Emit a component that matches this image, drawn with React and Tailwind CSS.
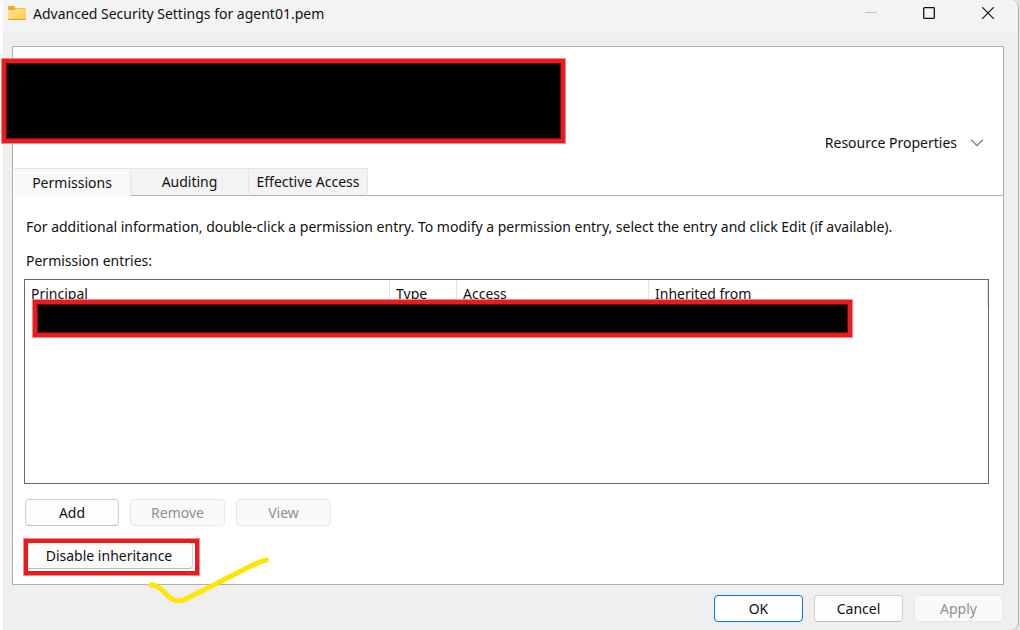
import React from "react";

const dialogButton =
  "h-[27px] rounded border border-[#d0d0d0] border-b-[#bcbcbc] bg-[#fdfdfd] text-center leading-5 disabled:border-[#e8e8e8] disabled:bg-[#f9f9f9] disabled:text-[#909090]";

const frame = "absolute z-10 border-4 border-[#e81c1c] outline outline-1 outline-[#f28a8a]";

const redaction = "bg-black shadow-[inset_0_0_0_1px_#6e0d0d]";

function FolderIcon() {
  return (
    <svg width="18" height="15" viewBox="0 0 18 15" aria-hidden="true">
      <defs>
        <linearGradient id="folder" x1="0" y1="0" x2="1" y2="1">
          <stop offset="0" stopColor="#ffe9a0" />
          <stop offset="1" stopColor="#ffcb3f" />
        </linearGradient>
      </defs>
      <path d="M0 1.2C0 .5.5 0 1.2 0h4.6l1.7 2H17c.6 0 1 .4 1 1v10H0z" fill="#f2ab17" />
      <path d="M0 4h6.2l1.6-1.6H17.2c.5 0 .8.3.8.8V13c0 .6-.4 1-1 1H1c-.6 0-1-.4-1-1z" fill="url(#folder)" />
      <path d="M.2 13.4h17.6" stroke="#e9a11b" strokeWidth="1" />
    </svg>
  );
}

function TitleBar() {
  return (
    <header className="flex h-8 items-start justify-between rounded-tr-lg bg-[#f3f3f3] pl-[5px]">
      <div className="flex h-[27px] items-center gap-[7px]">
        <FolderIcon />
        <h1 className="whitespace-nowrap">Advanced Security Settings for agent01.pem</h1>
      </div>
      <div className="flex h-[26px]">
        <button type="button" aria-label="Minimize" disabled className="flex w-[59px] items-center justify-center">
          <svg width="12" height="12" viewBox="0 0 12 12">
            <path d="M0 5.5h12" stroke="#c4c4c4" />
          </svg>
        </button>
        <button type="button" aria-label="Maximize" className="flex w-[58px] items-center justify-center">
          <svg width="12" height="12" viewBox="0 0 12 12">
            <rect x=".7" y=".7" width="10.6" height="10.6" rx=".8" fill="none" stroke="#111" strokeWidth="1.3" />
          </svg>
        </button>
        <button type="button" aria-label="Close" className="flex w-[60px] items-center justify-center">
          <svg width="12" height="12" viewBox="0 0 12 12">
            <path d="M.3.3l11.4 11.4M11.7.3L.3 11.7" stroke="#111" strokeWidth="1.2" />
          </svg>
        </button>
      </div>
    </header>
  );
}

function Tabs() {
  return (
    <div role="tablist" className="flex h-7 pl-px">
      <button type="button" role="tab" aria-selected="true" className="w-[117px] border-t border-r border-[#e5e5e5] bg-[#f9f9f9]">
        Permissions
      </button>
      <button type="button" role="tab" aria-selected="false" className="w-[118px] border-t border-r border-b border-t-[#e5e5e5] border-r-[#e5e5e5] border-b-[#b0b0b0] bg-[#f3f3f3]">
        Auditing
      </button>
      <button type="button" role="tab" aria-selected="false" className="w-[119px] border-t border-r border-b border-t-[#e5e5e5] border-r-[#e5e5e5] border-b-[#b0b0b0] bg-[#f3f3f3] whitespace-nowrap">
        Effective Access
      </button>
      <div className="grow border-b border-[#b0b0b0]" />
    </div>
  );
}

function Entries() {
  return (
    <div className="relative mt-2 grow border border-[#666]">
      <table className="w-full table-fixed border-separate border-spacing-0 text-left">
        <thead>
          <tr className="h-[26px]">
            <th scope="col" className="w-[365px] border-r border-[#e5e5e5] p-0 pt-0.5 pl-1.5 font-normal">Principal</th>
            <th scope="col" className="w-[67px] border-r border-[#e5e5e5] p-0 pt-0.5 pl-1.5 font-normal">Type</th>
            <th scope="col" className="w-[192px] border-r border-[#e5e5e5] p-0 pt-0.5 pl-1.5 font-normal">Access</th>
            <th scope="col" className="border-r border-[#e5e5e5] p-0 pt-0.5 pl-1.5 font-normal">Inherited from</th>
          </tr>
        </thead>
      </table>
      <div className={`${frame} ${redaction} top-5 left-2 h-[37px] w-[819px]`} />
    </div>
  );
}

export default function App() {
  return (
    <div className="flex min-h-screen bg-[#e4e4e4] font-['Noto_Sans','Open_Sans',sans-serif] text-[14px] leading-5 text-[#111]">
      <div className="w-[3px] shrink-0 bg-white" />
      <main className="mr-px flex grow flex-col rounded-r-lg border-r border-[#b0b0b0] bg-[#efefef]">
        <TitleBar />
        <section className="relative mt-3.5 mr-3.5 ml-[9px] flex grow flex-col border border-[#b0b0b0] bg-white">
          <div className={`${frame} ${redaction} top-3 -left-[11px] h-[84px] w-[563px]`} />
          <div className="flex h-[121px] items-end justify-end pr-[19px] pb-[15px]">
            <button type="button" aria-expanded="false" className="flex items-center gap-[13px]">
              Resource Properties
              <svg width="14" height="8" viewBox="0 0 14 8" aria-hidden="true">
                <path d="M1 .8l6 5.8 6-5.8" fill="none" stroke="#777" strokeWidth="1.2" />
              </svg>
            </button>
          </div>
          <Tabs />
          <div className="flex grow flex-col pt-[21px] pr-3.5 pb-[15px] pl-[11px]">
            <p className="pl-0.5 whitespace-nowrap">
              For additional information, double-click a permission entry. To modify a permission entry, select the entry and click Edit (if available).
            </p>
            <p className="mt-3.5 pl-0.5">Permission entries:</p>
            <Entries />
            <div className="mt-[15px] flex gap-[11px] pl-px">
              <button type="button" className={`${dialogButton} w-[94px]`}>Add</button>
              <button type="button" disabled className={`${dialogButton} w-[95px]`}>Remove</button>
              <button type="button" disabled className={`${dialogButton} w-[95px]`}>View</button>
            </div>
            <div className="relative mt-4 ml-px flex w-fit">
              <button type="button" className={`${dialogButton} w-[168px] whitespace-nowrap`}>Disable inheritance</button>
              <div className={`${frame} pointer-events-none -top-[3px] -left-px h-9 w-[175px]`} />
              <svg width="124" height="48" viewBox="0 0 124 48" className="pointer-events-none absolute top-3.5 left-[122px] z-10" aria-hidden="true">
                <path d="M4 29C17 29 19 45 32 45C37 45 42 41 49 38L98 13C106 9 113 5 119.500 4" fill="none" stroke="#ffe600" strokeWidth="5" strokeLinecap="round" />
              </svg>
            </div>
          </div>
        </section>
        <footer className="flex justify-end gap-[11px] pt-2.5 pr-[15px] pb-2">
          <button type="button" className="h-[27px] w-[89px] rounded border border-[#0078d4] bg-[#fdfdfd] leading-5">OK</button>
          <button type="button" className={`${dialogButton} w-[89px]`}>Cancel</button>
          <button type="button" disabled className={`${dialogButton} w-[89px]`}>Apply</button>
        </footer>
      </main>
    </div>
  );
}
